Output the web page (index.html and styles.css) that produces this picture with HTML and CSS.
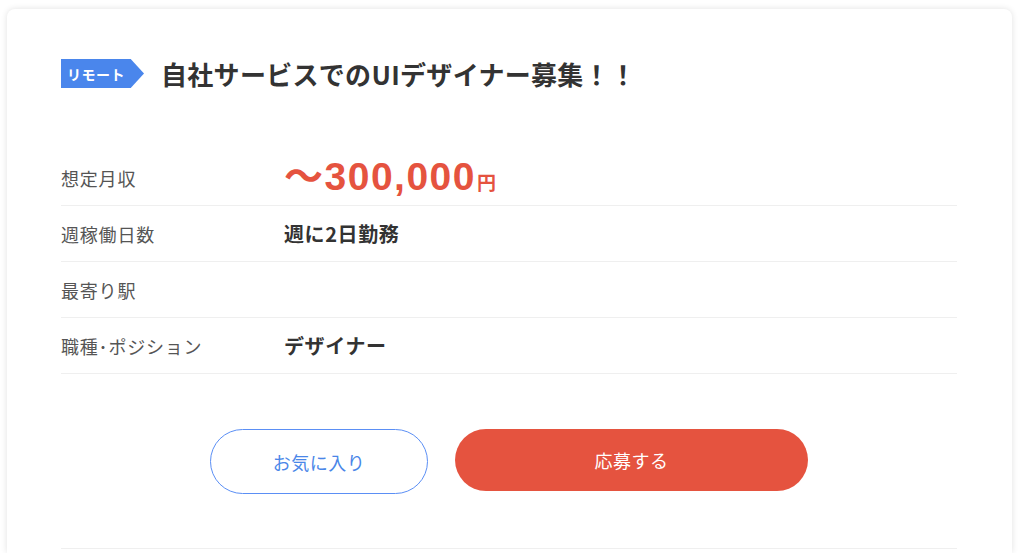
FILE: index.html
```html
<!DOCTYPE html>
<html lang="ja">
<head>
<meta charset="utf-8">
<link rel="stylesheet" href="styles.css">
</head>
<body>
<div class="card">
  <div class="head">
    <span class="badge">リモート</span>
    <h1 class="title">自社サービスでのUIデザイナー募集！！</h1>
  </div>
  <dl class="specs">
    <div class="row">
      <dt>想定月収</dt>
      <dd class="salary"><span class="amount">〜300,000</span><span class="yen">円</span></dd>
    </div>
    <div class="row">
      <dt>週稼働日数</dt>
      <dd>週に2日勤務</dd>
    </div>
    <div class="row">
      <dt>最寄り駅</dt>
      <dd></dd>
    </div>
    <div class="row">
      <dt>職種･ポジション</dt>
      <dd>デザイナー</dd>
    </div>
  </dl>
  <div class="actions">
    <button class="btn fav">お気に入り</button>
    <button class="btn apply">応募する</button>
  </div>
  <div class="foot"></div>
</div>
</body>
</html>
```
FILE: styles.css
```css
html, body {
  margin: 0;
  padding: 0;
  background: #ffffff;
  font-family: "Noto Sans CJK JP", "Noto Sans", sans-serif;
  color: #333;
}
body {
  padding: 9px 12px 0 7px;
  height: 553px;
  box-sizing: border-box;
  overflow: hidden;
}
.card {
  background: #fff;
  border-radius: 8px 8px 0 0;
  box-shadow: 0 0 6px rgba(0,0,0,0.12);
  padding: 50px 55px 0 54px;
  height: 100%;
  box-sizing: border-box;
}
.head {
  display: flex;
  align-items: center;
  gap: 17px;
  height: 29px;
}
.badge {
  display: flex;
  align-items: center;
  height: 29px;
  padding: 0 0 0 6px;
  background: #4a86ec;
  color: #fff;
  font-size: 14px;
  font-weight: 700;
  letter-spacing: 0.5px;
  clip-path: polygon(0 0, 84% 0, 100% 50%, 84% 100%, 0 100%);
  box-sizing: border-box;
  width: 83px;
  flex: none;
}
.title {
  margin: 0;
  font-size: 26px;
  font-weight: 700;
  color: #333;
  letter-spacing: 0.3px;
  white-space: nowrap;
}
.specs {
  margin: 62px 0 0 0;
  padding: 0;
}
.row {
  display: flex;
  align-items: center;
  height: 55px;
  border-bottom: 1px solid #efefef;
}
.row dt {
  width: 223px;
  font-size: 18px;
  letter-spacing: 0.8px;
  color: #555;
  white-space: nowrap;
}
.row dd {
  margin: 0;
  font-size: 20px;
  font-weight: 700;
  letter-spacing: 0.6px;
  color: #333;
}
.salary {
  display: flex;
  align-items: baseline;
  color: #e5533f !important;
}
.amount {
  font-family: "Liberation Sans", "Noto Sans CJK JP", sans-serif;
  font-size: 39px;
  font-weight: 700;
  letter-spacing: 1.5px;
  position: relative;
  top: -5px;
}
.yen {
  font-size: 19px;
  font-weight: 700;
  margin-left: 1px;
  letter-spacing: 0;
  position: relative;
  top: -5px;
}
.actions {
  display: flex;
  justify-content: center;
  align-items: flex-start;
  gap: 27px;
  margin-top: 55px;
}
.btn {
  font-family: "Noto Sans CJK JP", sans-serif;
  font-size: 18px;
  letter-spacing: 0.5px;
  border-radius: 33px;
  cursor: pointer;
}
.fav {
  width: 218px;
  height: 65px;
  background: #fff;
  border: 1.5px solid #5b8ff5;
  color: #4a86e8;
}
.apply {
  width: 353px;
  height: 62px;
  background: #e5533f;
  border: none;
  color: #fff;
}
.foot {
  margin-top: 54px;
  border-top: 1px solid #efefef;
}
```
